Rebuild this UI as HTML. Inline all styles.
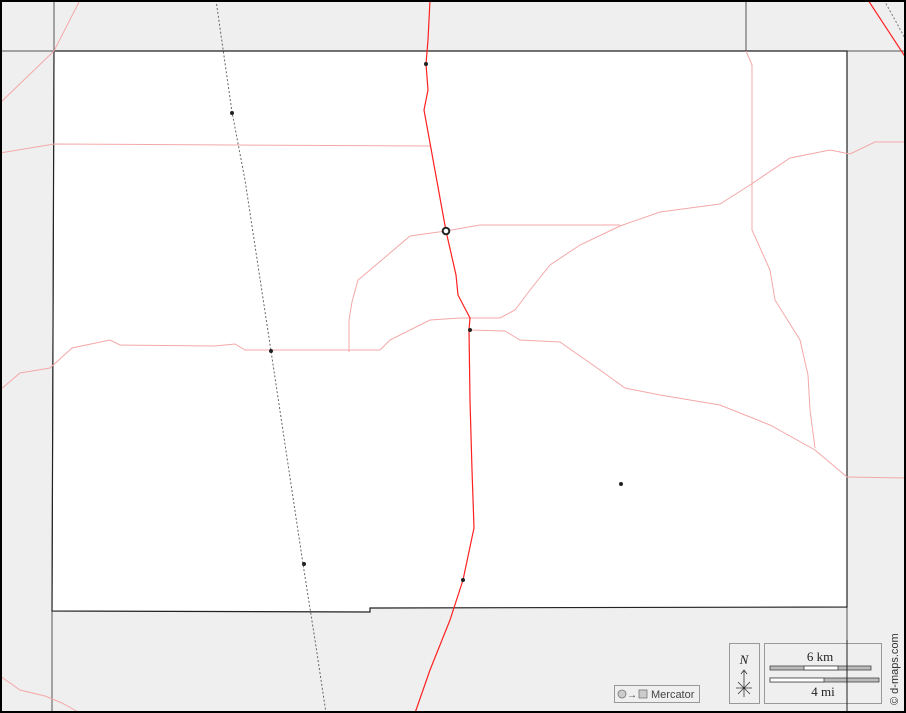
<!DOCTYPE html>
<html><head><meta charset="utf-8"><style>
html,body{margin:0;padding:0;background:#fff}
svg{display:block}
text{font-family:"Liberation Serif",serif}
</style></head><body>
<svg width="906" height="713" viewBox="0 0 906 713" xmlns="http://www.w3.org/2000/svg">
<rect x="0" y="0" width="906" height="713" fill="#efefef"/>
<path d="M54,51 L847,51 L847,607 L370,608 L370,612 L52,611 Z" fill="#fff"/>
<g stroke="#555" stroke-width="1" fill="none">
<path d="M0,51 L906,51"/>
<path d="M54,0 L54,51 L52,611 L52,713"/>
<path d="M847,51 L847,713"/>
<path d="M746,0 L746,51"/>
</g>
<g stroke="#222" stroke-width="1.2" fill="none">
<path d="M54,51 L847,51 L847,607 L370,608 L370,612 L52,611 Z"/>
</g>
<g stroke="#f4a8a8" stroke-width="1" fill="none">
<path d="M0,103 L54,51 L80,0"/>
<path d="M0,153 L54,144 L430,146"/>
<path d="M0,390 L20,373 L50,368 L72,348 L110,340 L120,345 L215,346 L235,344 L245,350 L380,350 L390,340 L430,320 L460,318 L500,318 L515,310 L530,290 L550,265 L580,245 L620,226 L660,212 L690,208 L720,204 L750,185 L790,158 L830,150 L850,154 L875,142 L906,142"/>
<path d="M446,231 L480,225 L620,225"/>
<path d="M446,231 L410,236 L370,270 L358,280 L352,302 L349,320 L349,352"/>
<path d="M469,330 L505,331 L520,340 L560,342 L600,370 L625,388 L660,395 L720,405 L770,425 L815,450 L847,477 L906,478"/>
<path d="M746,51 L752,65 L752,230 L770,270 L775,300 L800,340 L808,375 L810,410 L815,448"/>
<path d="M0,676 L20,690 L45,696 L62,703 L80,713"/>
</g>
<g stroke="#ff2020" stroke-width="1.2" fill="none">
<path d="M430,0 L428,40 L426,64 L428,90 L424,110 L446,231 L456,275 L458,295 L470,318 L469,330 L470,400 L472,470 L474,528 L463,580 L450,620 L430,670 L415,713"/>
<path d="M868,0 L906,58"/>
</g>
<path d="M884,0 L906,40" stroke="#777" stroke-width="1" stroke-dasharray="2,2" fill="none"/>
<path d="M216,0 L232,112 L245,180 L271,351 L303,564 L315,640 L326,713" stroke="#666" stroke-width="1" stroke-dasharray="2,2" fill="none"/>
<g fill="#222">
<circle cx="426" cy="64" r="2"/>
<circle cx="232" cy="113" r="2"/>
<circle cx="271" cy="351" r="2"/>
<circle cx="470" cy="330" r="2"/>
<circle cx="621" cy="484" r="2"/>
<circle cx="304" cy="564" r="2"/>
<circle cx="463" cy="580" r="2"/>
</g>
<circle cx="446" cy="231" r="3.3" fill="#fff" stroke="#222" stroke-width="2"/>
<rect x="614.5" y="685.5" width="85" height="17" fill="#efefef" stroke="#999"/>
<circle cx="622" cy="694" r="4" fill="#ccc" stroke="#777" stroke-width="0.8"/>
<text x="627" y="698" font-size="10" fill="#444" font-family="Liberation Sans">→</text>
<rect x="639" y="690" width="8" height="8" fill="#ccc" stroke="#777" stroke-width="0.8"/>
<text x="651" y="698" font-size="11" fill="#444" style="font-family:'Liberation Sans',sans-serif">Mercator</text>
<rect x="729.5" y="643.5" width="30" height="60" fill="#efefef" stroke="#999"/>
<text x="744" y="664" font-size="13" font-style="italic" text-anchor="middle" fill="#222">N</text>
<path d="M744,671 L744,697 M741,674 L744,670 L747,674 M736,688 L752,688 M738,682 L750,694 M750,682 L738,694" stroke="#333" stroke-width="0.8" fill="none"/>
<rect x="764.5" y="643.5" width="117" height="60" fill="#efefef" stroke="#999"/>
<text x="820" y="661" font-size="13" text-anchor="middle" fill="#222">6 km</text>
<rect x="770" y="666" width="101" height="4" fill="#bbb" stroke="#444" stroke-width="0.8"/>
<rect x="804" y="666" width="34" height="4" fill="#fff" stroke="#444" stroke-width="0.8"/>
<rect x="770" y="678" width="109" height="4" fill="#bbb" stroke="#444" stroke-width="0.8"/>
<rect x="770" y="678" width="54" height="4" fill="#fff" stroke="#444" stroke-width="0.8"/>
<text x="823" y="696" font-size="13" text-anchor="middle" fill="#222">4 mi</text>
<line x1="847" y1="640" x2="847" y2="713" stroke="#222" stroke-width="1"/>
<text transform="translate(898,705) rotate(-90)" font-size="11" fill="#333" style="font-family:'Liberation Sans',sans-serif">© d-maps.com</text>
<rect x="1" y="1" width="904" height="711" fill="none" stroke="#000" stroke-width="2"/>
</svg>
</body></html>
